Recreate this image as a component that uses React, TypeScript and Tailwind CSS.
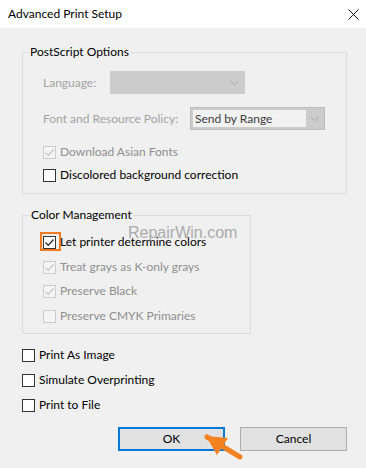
import React from "react";

const font = { fontFamily: 'Lato, "Noto Sans", sans-serif' };

function Check({ checked, disabled }: { checked?: boolean; disabled?: boolean }) {
  return (
    <span
      className={`flex h-[13px] w-[13px] shrink-0 items-center justify-center border ${
        disabled ? "border-[#cccccc] bg-[#f4f4f4]" : "border-[#333333] bg-white"
      }`}
    >
      {checked && (
        <svg width="11" height="11" viewBox="0 0 11 11">
          <path
            d="M1.5 5.5 L4.3 8.3 L9.5 2.5"
            fill="none"
            stroke={disabled ? "#c4c4c4" : "#222222"}
            strokeWidth="1.2"
          />
        </svg>
      )}
    </span>
  );
}

function Row({
  label,
  checked,
  disabled,
  className = "",
}: {
  label: string;
  checked?: boolean;
  disabled?: boolean;
  className?: string;
}) {
  return (
    <div className={`flex h-[16px] items-center gap-[4px] ${className}`}>
      <Check checked={checked} disabled={disabled} />
      <span className={`text-[12px] leading-[16px] ${disabled ? "text-[#8f8f8f]" : "text-black"}`}>{label}</span>
    </div>
  );
}

function Chevron() {
  return (
    <svg width="9" height="6" viewBox="0 0 9 6">
      <path d="M0.5 0.8 L4.5 4.8 L8.5 0.8" fill="none" stroke="#a8a8a8" strokeWidth="1" />
    </svg>
  );
}

export default function App() {
  return (
    <div className="relative h-[468px] w-[366px] overflow-hidden bg-[#f0f0f0]" style={font}>
      <div className="flex h-[28px] items-center justify-between bg-white pl-[8px] pr-[7px]">
        <span className="text-[12px] text-black">Advanced Print Setup</span>
        <svg width="11" height="11" viewBox="0 0 11 11" className="mt-[1px]">
          <path d="M0.5 0.5 L10.5 10.5 M10.5 0.5 L0.5 10.5" stroke="#111" strokeWidth="1" />
        </svg>
      </div>

      <div className="flex flex-col px-[22px] pt-[16px]">
        <fieldset className="w-[325px] border border-[#dcdcdc]">
          <legend className="ml-[6px] px-[1px] text-[12px] leading-[16px] text-black">PostScript Options</legend>
          <div className="px-[20px] pb-[10px]">
            <div className="mt-[11px] flex h-[23px] items-center">
              <span className="w-[67px] text-[12px] text-[#a3a3a3]">Language:</span>
              <div className="flex h-[23px] w-[135px] items-center justify-end bg-[#cccccc] pr-[6px]">
                <Chevron />
              </div>
            </div>
            <div className="mt-[13px] flex h-[23px] items-center">
              <span className="w-[147px] text-[12px] text-[#a3a3a3]">Font and Resource Policy:</span>
              <div className="flex h-[23px] w-[135px] items-center border border-[#bdbdbd] bg-[#cccccc] p-[2px]">
                <div className="flex h-full w-[113px] items-center bg-[#f2f2f2] pl-[2px] text-[12px] text-[#3c3c3c]">
                  Send by Range
                </div>
                <div className="flex flex-1 items-center justify-center">
                  <Chevron />
                </div>
              </div>
            </div>
            <Row className="mt-[14px]" label="Download Asian Fonts" checked disabled />
            <Row className="mt-[7px]" label="Discolored background correction" />
          </div>
        </fieldset>

        <fieldset className="mt-[13px] w-[229px] border border-[#dcdcdc]">
          <legend className="ml-[7px] px-[1px] text-[12px] leading-[16px] text-black">Color Management</legend>
          <div className="px-[20px] pb-[9px]">
            <div className="relative mt-[11px]">
              <Row label="Let printer determine colors" checked />
              <div className="absolute left-[-3px] top-[-2px] h-[19px] w-[21px] border-2 border-[#f47a20]" />
            </div>
            <Row className="mt-[9px]" label="Treat grays as K-only grays" checked disabled />
            <Row className="mt-[8px]" label="Preserve Black" checked disabled />
            <Row className="mt-[9px]" label="Preserve CMYK Primaries" disabled />
          </div>
        </fieldset>

        <Row className="mt-[13px]" label="Print As Image" />
        <Row className="mt-[9px]" label="Simulate Overprinting" />
        <Row className="mt-[9px]" label="Print to File" />

        <div className="mt-[14px] flex justify-end gap-[15px]">
          <button className="flex h-[24px] w-[107px] items-center justify-center border-2 border-[#0078d7] bg-[#e1e1e1] text-[12px] text-black">
            OK
          </button>
          <button className="mr-[-3px] flex h-[24px] w-[107px] items-center justify-center border border-[#adadad] bg-[#e1e1e1] text-[12px] text-black">
            Cancel
          </button>
        </div>
      </div>

      <div
        className="pointer-events-none absolute left-[128px] top-[222px] text-[16px] leading-[22px] text-[#9a9a9a] opacity-80"
        style={{ fontFamily: '"Liberation Sans", Arial, sans-serif' }}
      >
        RepairWin.com
      </div>

      <svg className="pointer-events-none absolute left-[200px] top-[430px]" width="46" height="34" viewBox="0 0 46 34">
        <path d="M7 7 L40 27" stroke="#f58220" strokeWidth="5" strokeLinecap="round" />
        <path d="M6 6 L28 8 L17 25 Z" fill="#f58220" />
      </svg>
    </div>
  );
}
